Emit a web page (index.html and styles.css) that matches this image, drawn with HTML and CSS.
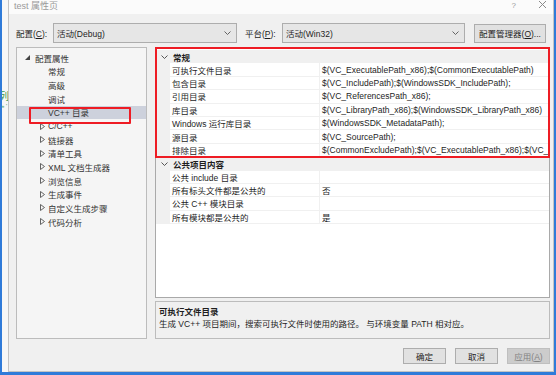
FILE: index.html
```html
<!DOCTYPE html>
<html lang="zh">
<head>
    <meta charset="UTF-8">
    <title>test 属性页</title>
    <link rel="stylesheet" href="styles.css">
</head>
<body>
    <div class="screen">
        <div class="backdrop">
            <span class="behind">列</span>
            <span class="behind-sub">» '</span>
        </div>
        <div class="dialog">
            <div class="titlebar">
                <span class="title">test 属性页</span>
                <span class="ctl help">?</span>
                <span class="ctl close">
                    <svg width="9" height="9" viewBox="0 0 9 9"><path d="M1 1L8 8M8 1L1 8" stroke="#8a8a8a" stroke-width="1"/></svg>
                </span>
            </div>

            <div class="toolbar">
                <label class="field-label">配置(<u>C</u>):</label>
                <div class="combo combo-config">
                    <span>活动(Debug)</span>
                    <svg class="caret" width="7" height="4" viewBox="0 0 7 4"><path d="M0.5 0.5L3.5 3.5L6.5 0.5" fill="none" stroke="#555" stroke-width="0.9"/></svg>
                </div>
                <label class="field-label">平台(<u>P</u>):</label>
                <div class="combo combo-platform">
                    <span>活动(Win32)</span>
                    <svg class="caret" width="7" height="4" viewBox="0 0 7 4"><path d="M0.5 0.5L3.5 3.5L6.5 0.5" fill="none" stroke="#555" stroke-width="0.9"/></svg>
                </div>
                <button class="btn btn-manager">配置管理器(<u>O</u>)...</button>
            </div>

            <div class="main">
                <div class="tree">
                    <div class="node root">
                        <svg class="exp" width="5" height="5" viewBox="0 0 5 5"><path d="M5 0L5 5L0 5Z" fill="#444"/></svg>
                        <span>配置属性</span>
                    </div>
                    <div class="node leaf">常规</div>
                    <div class="node leaf">高级</div>
                    <div class="node leaf">调试</div>
                    <div class="node leaf selected"><span class="mark">VC++ 目录</span></div>
                    <div class="node branch"><svg class="col" width="5" height="7" viewBox="0 0 5 7"><path d="M0.5 0.5L4.5 3.5L0.5 6.5Z" fill="none" stroke="#555" stroke-width="0.9"/></svg>C/C++</div>
                    <div class="node branch"><svg class="col" width="5" height="7" viewBox="0 0 5 7"><path d="M0.5 0.5L4.5 3.5L0.5 6.5Z" fill="none" stroke="#555" stroke-width="0.9"/></svg>链接器</div>
                    <div class="node branch"><svg class="col" width="5" height="7" viewBox="0 0 5 7"><path d="M0.5 0.5L4.5 3.5L0.5 6.5Z" fill="none" stroke="#555" stroke-width="0.9"/></svg>清单工具</div>
                    <div class="node branch"><svg class="col" width="5" height="7" viewBox="0 0 5 7"><path d="M0.5 0.5L4.5 3.5L0.5 6.5Z" fill="none" stroke="#555" stroke-width="0.9"/></svg>XML 文档生成器</div>
                    <div class="node branch"><svg class="col" width="5" height="7" viewBox="0 0 5 7"><path d="M0.5 0.5L4.5 3.5L0.5 6.5Z" fill="none" stroke="#555" stroke-width="0.9"/></svg>浏览信息</div>
                    <div class="node branch"><svg class="col" width="5" height="7" viewBox="0 0 5 7"><path d="M0.5 0.5L4.5 3.5L0.5 6.5Z" fill="none" stroke="#555" stroke-width="0.9"/></svg>生成事件</div>
                    <div class="node branch"><svg class="col" width="5" height="7" viewBox="0 0 5 7"><path d="M0.5 0.5L4.5 3.5L0.5 6.5Z" fill="none" stroke="#555" stroke-width="0.9"/></svg>自定义生成步骤</div>
                    <div class="node branch"><svg class="col" width="5" height="7" viewBox="0 0 5 7"><path d="M0.5 0.5L4.5 3.5L0.5 6.5Z" fill="none" stroke="#555" stroke-width="0.9"/></svg>代码分析</div>
                </div>

                <div class="right">
                    <div class="grid">
                        <div class="group highlight">
                            <div class="cat">
                                <svg class="chev" width="7" height="4" viewBox="0 0 7 4"><path d="M0.5 0.5L3.5 3.5L6.5 0.5" fill="none" stroke="#444" stroke-width="0.9"/></svg>
                                <span>常规</span>
                            </div>
                            <div class="prop"><span class="name">可执行文件目录</span><span class="val">$(VC_ExecutablePath_x86);$(CommonExecutablePath)</span></div>
                            <div class="prop"><span class="name">包含目录</span><span class="val">$(VC_IncludePath);$(WindowsSDK_IncludePath);</span></div>
                            <div class="prop"><span class="name">引用目录</span><span class="val">$(VC_ReferencesPath_x86);</span></div>
                            <div class="prop"><span class="name">库目录</span><span class="val">$(VC_LibraryPath_x86);$(WindowsSDK_LibraryPath_x86)</span></div>
                            <div class="prop"><span class="name">Windows 运行库目录</span><span class="val">$(WindowsSDK_MetadataPath);</span></div>
                            <div class="prop"><span class="name">源目录</span><span class="val">$(VC_SourcePath);</span></div>
                            <div class="prop"><span class="name">排除目录</span><span class="val">$(CommonExcludePath);$(VC_ExecutablePath_x86);$(VC_LibraryPath_x86)</span></div>
                        </div>
                        <div class="group">
                            <div class="cat">
                                <svg class="chev" width="7" height="4" viewBox="0 0 7 4"><path d="M0.5 0.5L3.5 3.5L6.5 0.5" fill="none" stroke="#444" stroke-width="0.9"/></svg>
                                <span>公共项目内容</span>
                            </div>
                            <div class="prop"><span class="name">公共 include 目录</span><span class="val"></span></div>
                            <div class="prop"><span class="name">所有标头文件都是公共的</span><span class="val">否</span></div>
                            <div class="prop"><span class="name">公共 C++ 模块目录</span><span class="val"></span></div>
                            <div class="prop"><span class="name">所有模块都是公共的</span><span class="val">是</span></div>
                        </div>
                    </div>
                    <div class="desc">
                        <div class="desc-title">可执行文件目录</div>
                        <div class="desc-text">生成 VC++ 项目期间，搜索可执行文件时使用的路径。 与环境变量 PATH 相对应。</div>
                    </div>
                </div>
            </div>

            <div class="buttons">
                <button class="btn btn-action">确定</button>
                <button class="btn btn-action">取消</button>
                <button class="btn btn-action disabled">应用(<u>A</u>)</button>
            </div>
        </div>
    </div>
</body>
</html>
```

FILE: styles.css
```css
* {
    box-sizing: border-box;
}

body {
    margin: 0;
    font-family: "Liberation Sans", "Noto Sans CJK SC", sans-serif;
    font-size: 8.5px;
    color: #1e1e1e;
    background: #ffffff;
}

u {
    text-decoration: underline;
}

.screen {
    width: 556px;
    height: 375px;
    display: flex;
    border-left: 2px solid #2f7bd9;
    border-right: 2px solid #2f7bd9;
    border-bottom: 3px solid #2f7bd9;
    overflow: hidden;
}

.backdrop {
    width: 6px;
    background: #f7f7f7;
    overflow: hidden;
    padding-top: 91px;
    white-space: nowrap;
}

.behind {
    display: block;
    color: #3a9a4a;
    font-size: 10px;
    margin-left: -3px;
    line-height: 12px;
}

.behind-sub {
    display: block;
    color: #3a9a4a;
    font-size: 6px;
    margin-left: -1px;
    line-height: 6px;
}

.dialog {
    flex: 1;
    background: #f0f0f0;
    border-left: 1px solid #c3c3c3;
    border-right: 1px solid #c3c3c3;
    border-bottom: 1px solid #c3c3c3;
    display: flex;
    flex-direction: column;
}

.titlebar {
    height: 14px;
    background: #fbfbfb;
    display: flex;
    align-items: center;
    padding-left: 5px;
    padding-right: 6px;
}

.title {
    flex: 1;
    color: #9a9a9a;
    font-size: 9px;
    margin-top: -4px;
}

.ctl {
    color: #9a9a9a;
    font-size: 8px;
    margin-top: -4px;
}

.help {
    margin-right: 22px;
}

.close {
    display: flex;
    margin-top: -5px;
}

.toolbar {
    display: flex;
    align-items: center;
    margin-top: 9px;
    padding-left: 7px;
    height: 20px;
}

.field-label {
    width: 37px;
    font-size: 8.5px;
    color: #1e1e1e;
}

.combo {
    height: 20px;
    background: #e6e6e6;
    border: 1px solid #adadad;
    display: flex;
    align-items: center;
    padding-left: 3px;
    padding-right: 5px;
    justify-content: space-between;
}

.combo-config {
    width: 184px;
    margin-right: 8px;
}

.combo-platform {
    width: 183px;
    margin-right: 9px;
}

.btn {
    font-family: "Liberation Sans", "Noto Sans CJK SC", sans-serif;
    font-size: 8.5px;
    color: #1e1e1e;
    background: #e1e1e1;
    border: 1px solid #adadad;
    padding: 0;
}

.btn-manager {
    width: 72px;
    height: 19px;
}

.main {
    display: flex;
    margin-top: 4px;
    padding-left: 7px;
    height: 292px;
}

.tree {
    width: 131px;
    background: #f5f5f5;
    border: 1px solid #bcbcbc;
    padding-top: 3px;
    color: #333333;
}

.node {
    height: 13.65px;
    display: flex;
    align-items: center;
    white-space: nowrap;
}

.root {
    padding-left: 8px;
}

.root .exp {
    margin-right: 5px;
}

.leaf {
    padding-left: 31px;
}

.branch {
    padding-left: 23px;
}

.branch .col {
    margin-right: 3px;
}

.selected {
    background: #cdd1dc;
    position: relative;
}

.selected .mark::before {
    content: "";
    position: absolute;
    left: 12px;
    top: 1px;
    width: 98px;
    height: 13px;
    border: 2px solid #ee1c24;
    border-radius: 1px;
}

.right {
    width: 395px;
    margin-left: 8px;
    display: flex;
    flex-direction: column;
}

.grid {
    height: 251px;
    background: #ffffff;
    border: 1px solid #a9a9a9;
}

.highlight {
    padding-top: 2px;
    outline: 2px solid #ee1c24;
    outline-offset: -1px;
    position: relative;
}

.cat {
    height: 13.4px;
    display: flex;
    align-items: center;
    background: #f0f0f0;
    font-weight: bold;
    padding-left: 5px;
}

.chev {
    margin-right: 5px;
}

.prop {
    height: 13.4px;
    display: flex;
    align-items: center;
    border-left: 14px solid #f0f0f0;
    border-bottom: 1px solid #f0f0f0;
    white-space: nowrap;
    overflow: hidden;
}

.name {
    flex-shrink: 0;
    width: 150px;
    padding-left: 2px;
    height: 100%;
    display: flex;
    align-items: center;
    border-right: 1px solid #f0f0f0;
}

.val {
    padding-left: 2px;
}

.desc {
    margin-top: 3px;
    height: 38px;
    background: #f0f0f0;
    border: 1px solid #bcbcbc;
    padding: 4px 0 0 3px;
}

.desc-title {
    font-weight: bold;
    line-height: 12px;
}

.desc-text {
    line-height: 13px;
}

.buttons {
    display: flex;
    justify-content: flex-end;
    gap: 9px;
    margin-top: 9px;
    padding-right: 3px;
}

.btn-action {
    width: 43px;
    height: 16px;
}

.disabled {
    background: #cccccc;
    border-color: #bfbfbf;
    color: #838383;
}
```
